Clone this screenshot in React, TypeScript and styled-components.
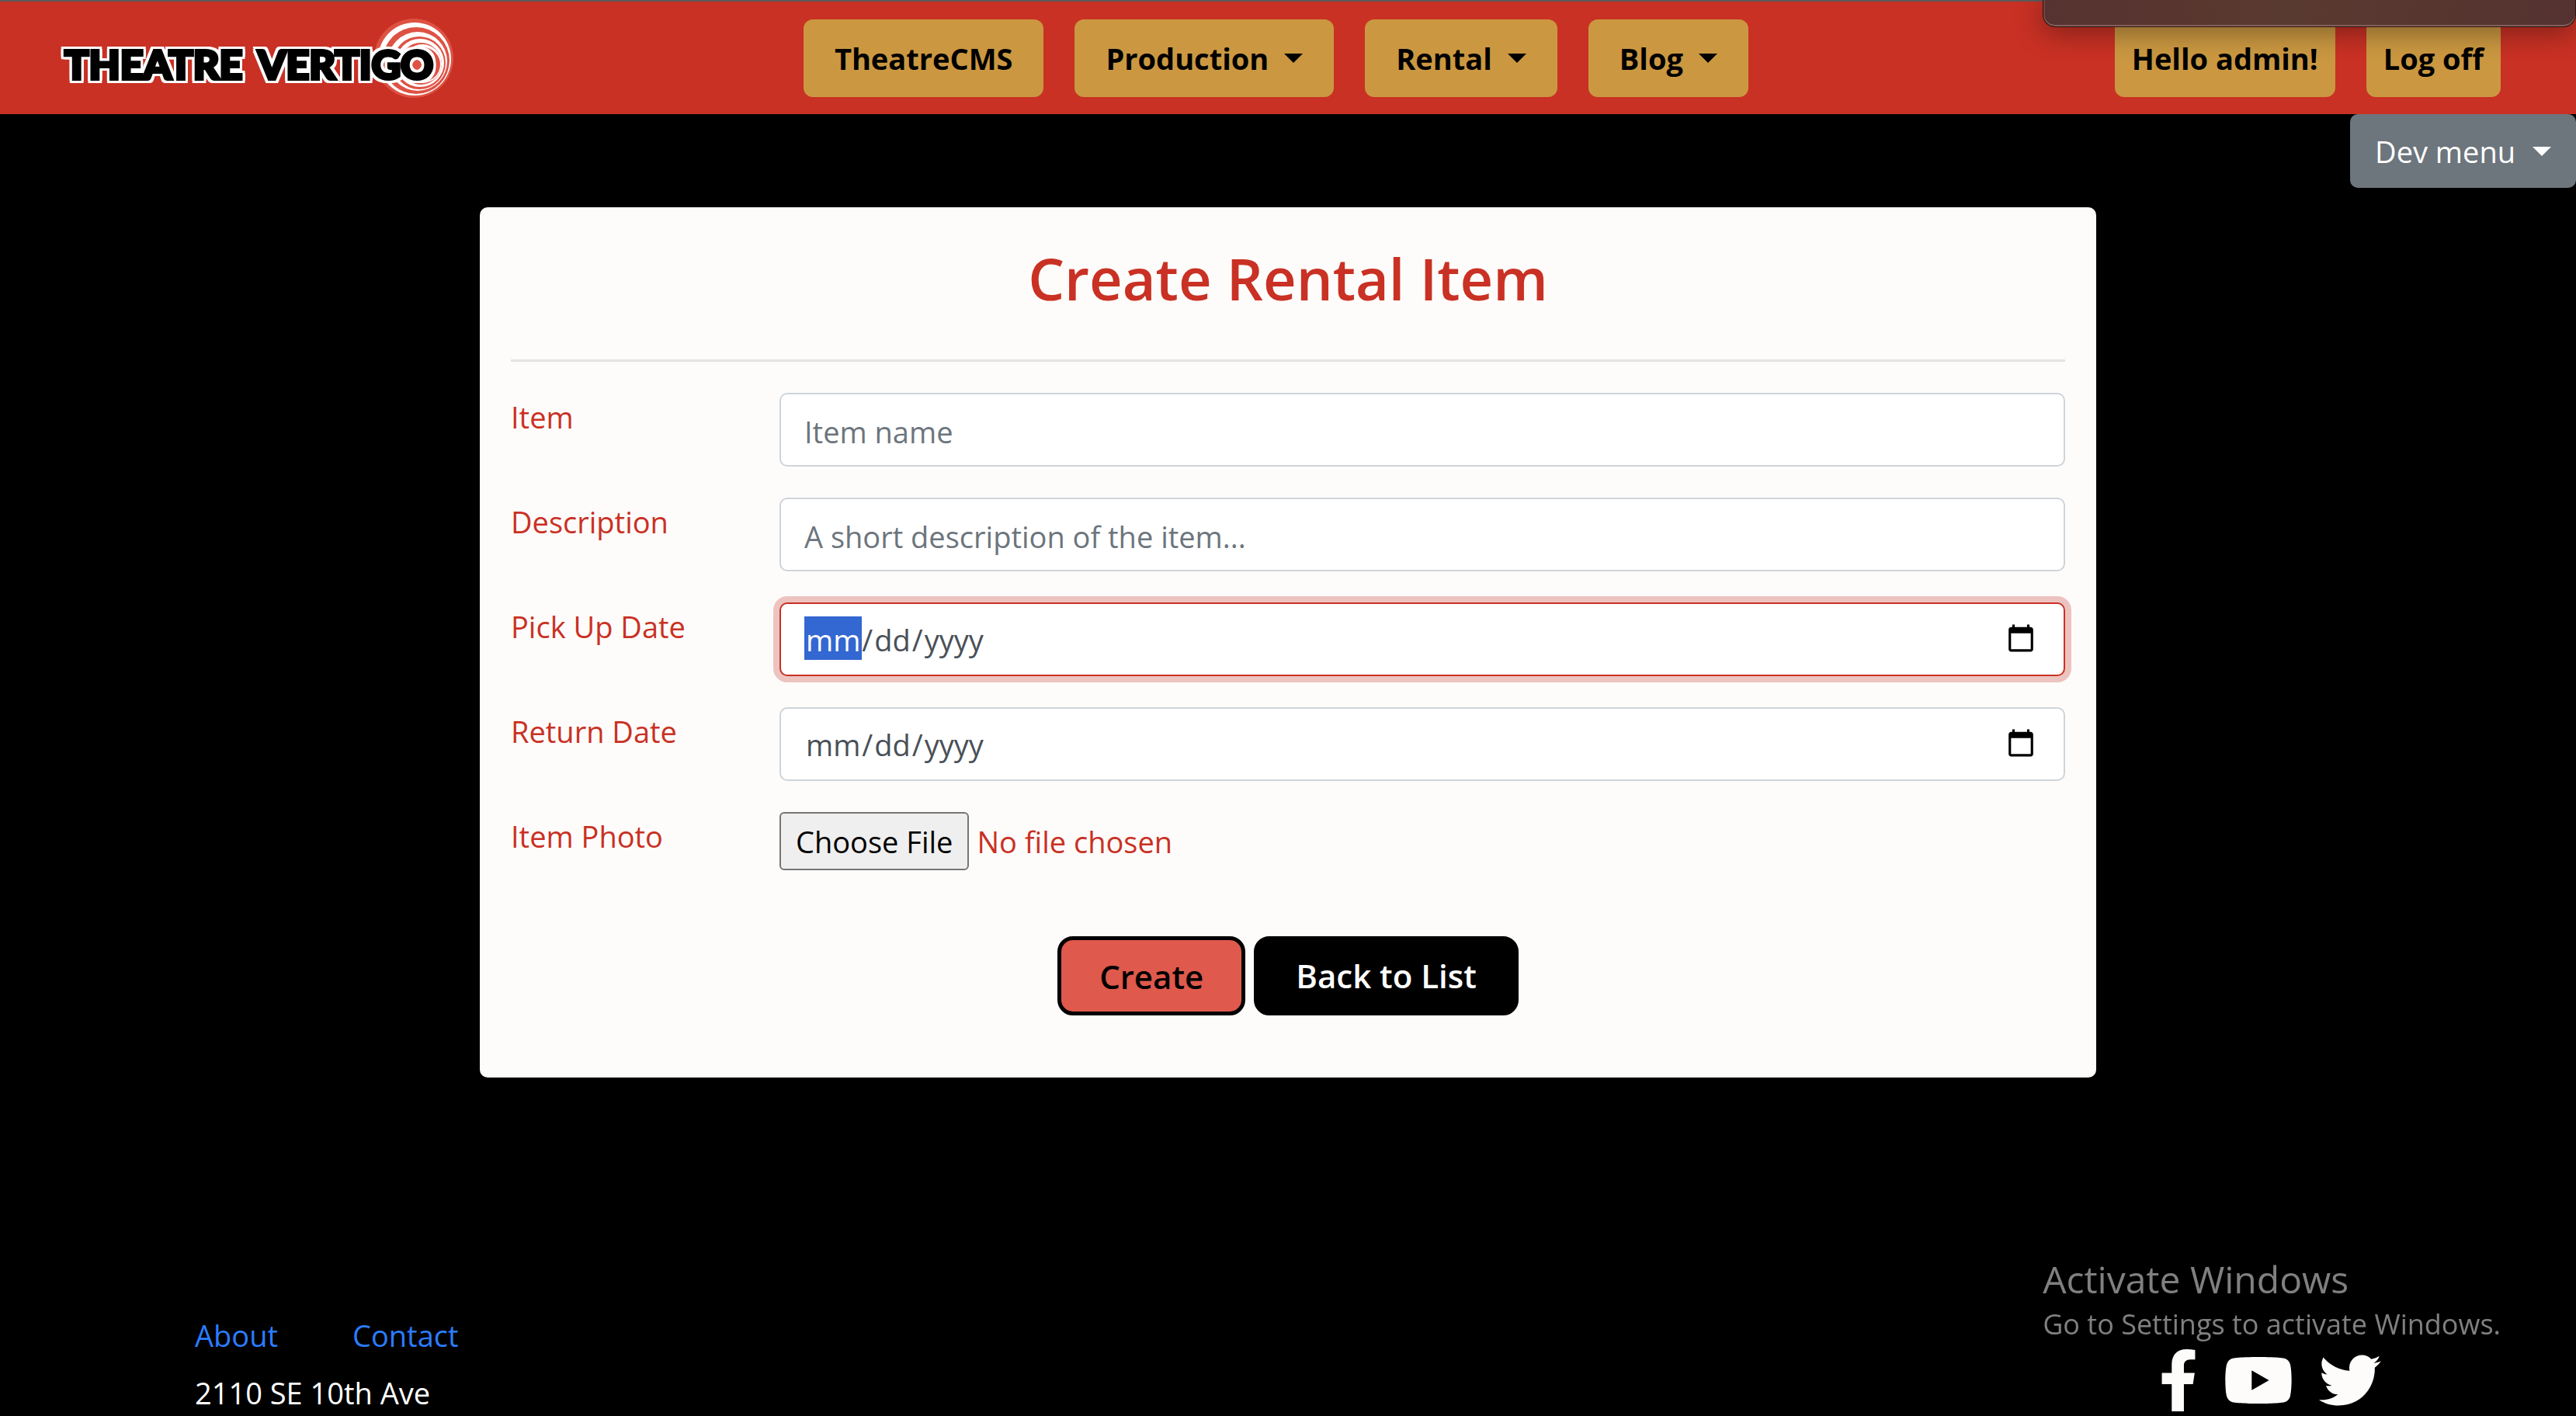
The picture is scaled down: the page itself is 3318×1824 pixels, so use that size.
import React from "react";
import styled, { createGlobalStyle, css } from "styled-components";
import { FaFacebookF, FaTwitter, FaYoutube } from "react-icons/fa";

const red = "#c93124";
const gold = "#cb9841";
const paper = "#fefcfa";

const GlobalStyle = createGlobalStyle`
  *, *::before, *::after { box-sizing: border-box; }
  body {
    margin: 0;
    background: #000;
    color: #fff;
    font: 38px/60px "Open Sans", "Noto Sans", sans-serif;
  }
`;

const Page = styled.div`
  display: flex;
  flex-direction: column;
  min-height: 100vh;
`;

const Header = styled.header`
  display: flex;
  align-items: center;
  justify-content: space-between;
  padding: 23px 97px 22px 78px;
  border-top: 2px solid #5b5b5b;
  background: ${red};
`;

const Brand = styled.a`
  display: flex;
  margin: -4px 0;
`;

const Nav = styled.nav`
  display: flex;
  gap: 40px;
  padding-right: 22px;
`;

const Account = styled.div`
  display: flex;
  gap: 40px;
`;

const buttonBase = css`
  display: inline-flex;
  align-items: center;
  border: 0;
  font-family: inherit;
  text-decoration: none;
  white-space: nowrap;
  cursor: pointer;
`;

const NavButton = styled.button<{ $compact?: boolean }>`
  ${buttonBase}
  gap: 20px;
  height: 100px;
  padding: 0 ${(p) => (p.$compact ? 22 : 40)}px;
  border-radius: 12px;
  background: ${gold};
  color: #000;
  font-size: 38px;
  font-weight: 700;
`;

const Caret = styled.span`
  border: 12px solid transparent;
  border-top-color: currentColor;
  border-bottom: 0;
`;

const DevButton = styled.button`
  ${buttonBase}
  align-self: flex-end;
  gap: 22px;
  height: 95px;
  padding: 0 32px;
  border-radius: 10px;
  background: #6d757d;
  color: #fff;
  font-size: 38px;
`;

const Card = styled.main`
  width: 100%;
  max-width: 2082px;
  margin: 25px auto 0;
  padding: 40px 40px 80px;
  border-radius: 10px;
  background: ${paper};
  color: ${red};
`;

const Title = styled.h1`
  margin: 0 0 52px;
  font-size: 74px;
  line-height: 104px;
  font-weight: 600;
  text-align: center;
`;

const Rule = styled.hr`
  height: 3px;
  margin: 0 0 40px;
  border: 0;
  background: #e5e4e2;
`;

const Row = styled.div`
  display: grid;
  grid-template-columns: 346px 1fr;
  align-items: start;
  min-height: 95px;
  margin-bottom: 40px;
`;

const Label = styled.label`
  line-height: 62px;
`;

const Field = styled.input`
  width: 100%;
  height: 95px;
  padding: 4px 30px 0;
  border: 2px solid #ced4da;
  border-radius: 10px;
  background: #fff;
  color: #495057;
  font: inherit;
  outline: 0;

  &::placeholder { color: #6c757d; opacity: 1; }

  &:focus {
    border-color: ${red};
    box-shadow: 0 0 0 8px #edc3c0;
  }
`;

const DateField = styled(Field).attrs({ type: "date" })`
  padding-top: 0;

  &::-webkit-datetime-edit-month-field,
  &::-webkit-datetime-edit-day-field,
  &::-webkit-datetime-edit-year-field {
    padding: 4px 2px 0;
  }

  &::-webkit-datetime-edit-month-field:focus {
    background-color: #2f78d2 !important;
    color: #fff;
  }

  &::-webkit-calendar-picker-indicator {
    width: 38px;
    height: 38px;
    padding: 0;
    margin-right: 6px;
    margin-bottom: 4px;
    background-size: 38px 38px;
  }
`;

const FileField = styled.input`
  width: 100%;
  color: ${red};
  font: inherit;

  &::file-selector-button {
    height: 75px;
    margin: 0 10px 0 0;
    padding: 0 19px;
    border: 2px solid #767676;
    border-radius: 6px;
    background: #efefef;
    color: #000;
    font: inherit;
  }
`;

const Actions = styled.div`
  display: flex;
  justify-content: center;
  gap: 11px;
  padding-top: 25px;
`;

const ActionButton = styled.button<{ $dark?: boolean }>`
  ${buttonBase}
  height: 102px;
  padding: 0 49px;
  border: 5px solid #000;
  border-radius: 20px;
  background: ${(p) => (p.$dark ? "#000" : "#df594c")};
  color: ${(p) => (p.$dark ? "#fff" : "#000")};
  font-size: 42px;
  font-weight: 600;
`;

const Footer = styled.footer`
  display: flex;
  align-items: flex-end;
  justify-content: space-between;
  margin-top: auto;
  padding: 0 251px;
`;

const FooterLinks = styled.nav`
  display: flex;
  gap: 96px;
  margin-bottom: 14px;
`;

const FooterLink = styled.a`
  color: #2b7cff;
  text-decoration: none;
`;

const Address = styled.address`
  font-style: normal;
`;

const Social = styled.div`
  display: flex;
  gap: 33px;
  padding-bottom: 6px;
`;

const SocialLink = styled.a<{ $width: number }>`
  display: flex;
  color: ${paper};

  svg { width: ${(p) => p.$width}px; height: 80px; }
`;

const Watermark = styled.aside`
  position: fixed;
  right: 97px;
  bottom: 94px;
  color: #808080;
  pointer-events: none;
`;

const WatermarkTitle = styled.p`
  margin: 0;
  font-size: 48px;
  line-height: 68px;
`;

const WatermarkText = styled.p`
  margin: 0;
  font-size: 36px;
  line-height: 48px;
`;

const SystemPanel = styled.div`
  position: fixed;
  top: 0;
  right: 0;
  width: 687px;
  height: 35px;
  border: 1px solid #2c1412;
  border-top: 0;
  border-radius: 0 0 16px 16px;
  background: linear-gradient(90deg, #573230, #593a30 45%, #573630 75%, #543230);
  box-shadow: inset 0 -2px 0 #84605a, inset 2px 0 0 #6c4642, 0 6px 36px rgba(0, 0, 0, 0.4);
`;

const rings = [
  [534, 76, 47, 536, 78, 43],
  [538, 79, 38, 540, 81, 34],
  [541, 81, 31, 542, 82, 27],
  [544, 82, 25, 545, 83, 22],
];

const Lettering = styled.g`
  font-family: Lato, sans-serif;
  font-weight: 900;
  font-size: 52px;
  fill: #000;
  stroke: #000;
  stroke-width: 4px;
  filter: drop-shadow(3px 0 0 #fff) drop-shadow(-3px 0 0 #fff) drop-shadow(0 3px 0 #fff)
    drop-shadow(0 -3px 0 #fff);
`;

const Logo = () => (
  <svg width="507" height="108" viewBox="78 21 507 108" role="img" aria-label="Theatre Vertigo">
    <circle cx="533" cy="75" r="51" fill="#de5244" />
    {rings.map(([ox, oy, or, ix, iy, ir]) => (
      <g key={or}>
        <circle cx={ox} cy={oy} r={or} fill="#fff" />
        <circle cx={ix} cy={iy} r={ir} fill="#de5244" />
      </g>
    ))}
    <Lettering>
      <text x="83" y="102">THEATRE</text>
      <text x="332" y="102">VERTIGO</text>
    </Lettering>
  </svg>
);

const menus = ["Production", "Rental", "Blog"];

export default function App() {
  return (
    <Page>
      <GlobalStyle />
      <Header>
        <Brand href="#"><Logo /></Brand>
        <Nav>
          <NavButton>TheatreCMS</NavButton>
          {menus.map((name) => (
            <NavButton key={name} aria-haspopup="menu">{name}<Caret /></NavButton>
          ))}
        </Nav>
        <Account>
          <NavButton $compact>Hello admin!</NavButton>
          <NavButton $compact>Log off</NavButton>
        </Account>
      </Header>
      <DevButton aria-haspopup="menu">Dev menu<Caret /></DevButton>

      <Card>
        <Title>Create Rental Item</Title>
        <Rule />
        <form onSubmit={(e) => e.preventDefault()}>
          <Row>
            <Label htmlFor="item">Item</Label>
            <Field id="item" type="text" placeholder="Item name" />
          </Row>
          <Row>
            <Label htmlFor="description">Description</Label>
            <Field id="description" type="text" placeholder="A short description of the item..." />
          </Row>
          <Row>
            <Label htmlFor="pickup">Pick Up Date</Label>
            <DateField id="pickup" autoFocus />
          </Row>
          <Row>
            <Label htmlFor="return">Return Date</Label>
            <DateField id="return" />
          </Row>
          <Row>
            <Label htmlFor="photo">Item Photo</Label>
            <FileField id="photo" type="file" />
          </Row>
          <Actions>
            <ActionButton type="submit">Create</ActionButton>
            <ActionButton as="a" href="#" $dark>Back to List</ActionButton>
          </Actions>
        </form>
      </Card>

      <Footer>
        <div>
          <FooterLinks>
            <FooterLink href="#">About</FooterLink>
            <FooterLink href="#">Contact</FooterLink>
          </FooterLinks>
          <Address>2110 SE 10th Ave</Address>
        </div>
        <Social>
          <SocialLink href="#" aria-label="Facebook" $width={50}><FaFacebookF /></SocialLink>
          <SocialLink href="#" aria-label="YouTube" $width={90}><FaYoutube /></SocialLink>
          <SocialLink href="#" aria-label="Twitter" $width={80}><FaTwitter /></SocialLink>
        </Social>
      </Footer>

      <Watermark>
        <WatermarkTitle>Activate Windows</WatermarkTitle>
        <WatermarkText>Go to Settings to activate Windows.</WatermarkText>
      </Watermark>
      <SystemPanel />
    </Page>
  );
}
